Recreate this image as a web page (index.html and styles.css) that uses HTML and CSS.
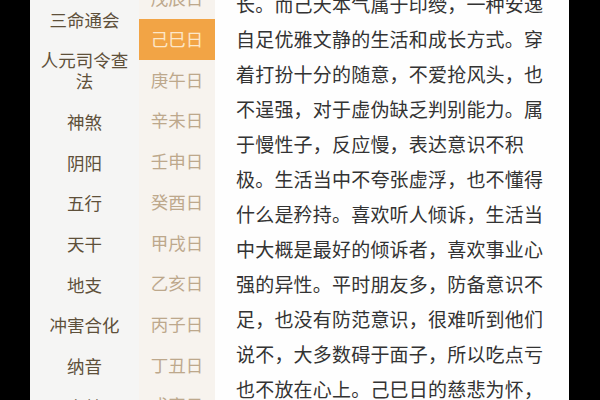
FILE: index.html
```html
<!DOCTYPE html>
<html lang="zh-CN">
<head>
<meta charset="utf-8">
<title>己巳日</title>
<link rel="stylesheet" href="styles.css">
</head>
<body>
<div class="frame">
  <div class="edge-left"></div>
  <nav class="nav">
    <ul class="nav-list">
      <li class="nav-item">三命通会</li>
      <li class="nav-item">人元司令查<br>法</li>
      <li class="nav-item">神煞</li>
      <li class="nav-item">阴阳</li>
      <li class="nav-item">五行</li>
      <li class="nav-item">天干</li>
      <li class="nav-item">地支</li>
      <li class="nav-item">冲害合化</li>
      <li class="nav-item">纳音</li>
      <li class="nav-item">大林</li>
    </ul>
  </nav>
  <div class="days">
    <ul class="day-list">
      <li class="day">戊辰日</li>
      <li class="day active">己巳日</li>
      <li class="day">庚午日</li>
      <li class="day">辛未日</li>
      <li class="day">壬申日</li>
      <li class="day">癸酉日</li>
      <li class="day">甲戌日</li>
      <li class="day">乙亥日</li>
      <li class="day">丙子日</li>
      <li class="day">丁丑日</li>
      <li class="day">戊寅日</li>
    </ul>
  </div>
  <main class="content">
    <p class="article">长。而己天本气属于印绶，一种安逸自足优雅文静的生活和成长方式。穿着打扮十分的随意，不爱抢风头，也不逞强，对于虚伪缺乏判别能力。属于慢性子，反应慢，表达意识不积极。生活当中不夸张虚浮，也不懂得什么是矜持。喜欢听人倾诉，生活当中大概是最好的倾诉者，喜欢事业心强的异性。平时朋友多，防备意识不足，也没有防范意识，很难听到他们说不，大多数碍于面子，所以吃点亏也不放在心上。己巳日的慈悲为怀，</p>
  </main>
  <div class="edge-right"></div>
</div>
</body>
</html>
```
FILE: styles.css
```css
html, body {
  margin: 0;
  padding: 0;
  background: #000;
}
body {
  width: 600px;
  height: 400px;
  overflow: hidden;
  font-family: "Noto Sans CJK SC", "Noto Sans", sans-serif;
}
.frame {
  display: flex;
  width: 600px;
  height: 400px;
  overflow: hidden;
}
.edge-left {
  width: 30px;
  flex: none;
  background: #000;
}
.nav {
  width: 109px;
  flex: none;
  background: #f5f5f4;
  overflow: hidden;
}
.nav-list, .day-list {
  list-style: none;
  margin: 0;
  padding: 0;
}
.nav-list {
  margin-top: -1.3px;
}
.nav-item {
  padding: 9.85px 0;
  line-height: 21px;
  font-size: 17.5px;
  font-weight: 400;
  color: #5e503a;
  text-align: center;
}
.days {
  width: 76px;
  flex: none;
  background: #f7f3ee;
  overflow: hidden;
}
.day-list {
  margin-top: -21.6px;
}
.day {
  height: 40.7px;
  line-height: 40.7px;
  font-size: 17.5px;
  color: #bda88c;
  text-align: center;
}
.day.active {
  background: #f2a445;
  color: #fde7c8;
}
.content {
  width: 354px;
  flex: none;
  background: #fefefe;
  overflow: hidden;
  padding-left: 21px;
  box-sizing: border-box;
}
.article {
  margin: -14.5px 0 0;
  width: 312px;
  font-size: 19px;
  letter-spacing: 0.2px;
  line-height: 35px;
  color: #333;
}
.edge-right {
  flex: 1;
  background: #000;
}
```
